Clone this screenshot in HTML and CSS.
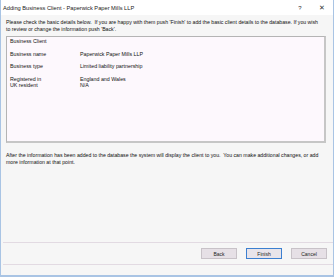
FILE: index.html
```html
<!DOCTYPE html>
<html lang="en">
<head>
  <meta charset="UTF-8">
  <title>Adding Business Client</title>
  <link rel="stylesheet" href="styles.css">
</head>
<body>
  <div class="window">
    <div class="titlebar">
      <span class="title">Adding Business Client - Paperwick Paper Mills LLP</span>
      <span class="title-btn help">?</span>
      <span class="title-btn close">&#x2715;</span>
    </div>

    <div class="body">
      <p class="intro">Please check the basic details below.&nbsp; If you are happy with them push 'Finish' to add the basic client details to the database. If you wish to review or change the information push 'Back'.</p>

      <div class="summary">
        <div class="summary-head">Business Client</div>
        <div class="row">
          <span class="label">Business name</span>
          <span class="value">Paperwick Paper Mills LLP</span>
        </div>
        <div class="row">
          <span class="label">Business type</span>
          <span class="value">Limited liability partnership</span>
        </div>
        <div class="row">
          <span class="label">Registered in<br>UK resident</span>
          <span class="value">England and Wales<br>N/A</span>
        </div>
      </div>

      <p class="outro">After the information has been added to the database the system will display the client to you.&nbsp; You can make additional changes, or add more information at that point.</p>
    </div>

    <div class="footer">
      <button class="btn">Back</button>
      <button class="btn default">Finish</button>
      <button class="btn">Cancel</button>
    </div>
    <div class="status"></div>
  </div>
</body>
</html>
```

FILE: styles.css
```css
html, body {
  margin: 0;
  height: 100%;
}

body {
  font-family: 'Liberation Sans', Arial, sans-serif;
  color: #111;
  background: #f6f6f6;
}

.window {
  box-sizing: border-box;
  width: 334px;
  height: 277px;
  display: flex;
  flex-direction: column;
  background: #f6f6f6;
  border: 1px solid #a9c4e4;
  border-top: none;
  border-bottom-width: 2px;
}

.titlebar {
  height: 15px;
  flex: none;
  display: flex;
  align-items: center;
  background: #fff;
  padding-left: 2px;
  font-size: 5.7px;
  color: #222;
}

.title {
  flex: 1;
}

.title-btn {
  width: 22px;
  text-align: center;
  font-size: 6px;
  color: #333;
}

.close {
  font-size: 6.5px;
}

.body {
  flex: 1;
  padding: 4px 7px 0 5px;
  font-size: 5.2px;
  line-height: 7px;
}

.intro, .outro {
  margin: 0;
}

.intro {
  padding-right: 4px;
}

.summary {
  margin: 3px 0 9px 0;
  height: 102px;
  background: #fdf8fd;
  border: 1px solid #b4b4b4;
  border-right: 2px solid #c6c6c6;
  border-bottom: 2px solid #c6c6c6;
  padding: 1px 3px;
  font-size: 5.3px;
  line-height: 6.5px;
}

.summary-head {
  margin-bottom: 6px;
}

.row {
  display: flex;
  margin-bottom: 6px;
}

.label {
  width: 70px;
}

.footer {
  flex: none;
  display: flex;
  justify-content: flex-end;
  gap: 9px;
  padding: 5px 6px 5px 0;
  margin-left: 2px;
  border-top: 1px solid #e2dae2;
  border-bottom: 1px solid #e2dae2;
}

.btn {
  width: 36px;
  height: 11px;
  padding: 0;
  font-family: 'Liberation Sans', Arial, sans-serif;
  font-size: 5px;
  color: #222;
  background: #e6e0e6;
  border: 1px solid #c8c2c8;
}

.btn.default {
  border-color: #3c7fd0;
  background: #e8e4ea;
}

.status {
  height: 10px;
  flex: none;
}
```
